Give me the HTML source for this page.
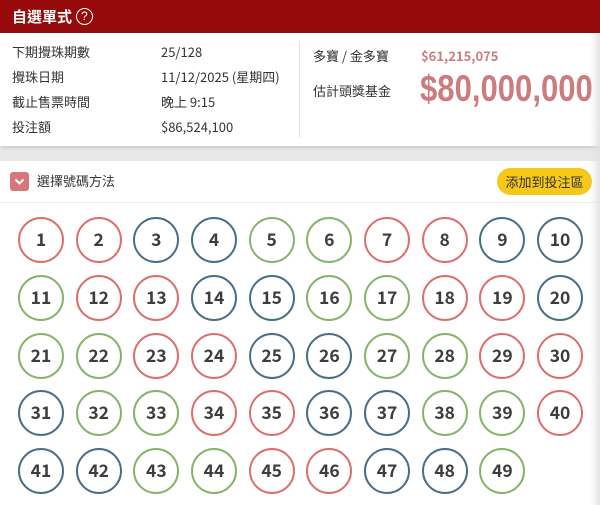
<!DOCTYPE html>
<html><head><meta charset="utf-8"><style>
*{margin:0;padding:0;box-sizing:border-box}
body{width:600px;height:505px;overflow:hidden;background:#e8e8e8;font-family:"Noto Sans CJK TC","Liberation Sans",sans-serif;color:#333;position:relative}
.hdr{position:absolute;left:0;top:0;width:600px;height:33px;background:#960a0b;color:#fff;font-size:15px;font-weight:bold;padding:0 0 0 12px;line-height:33px}
.q{position:absolute;left:76px;top:8px;width:17px;height:17px;border:1.5px solid #fff;border-radius:50%;font-size:12px;text-align:center;line-height:14px;font-weight:normal;font-family:"Liberation Sans",sans-serif}
.p1{position:absolute;left:0;top:33px;width:600px;height:113px;background:#fff;box-shadow:0 2px 3px rgba(0,0,0,.12)}
.t{position:absolute;font-size:13px;line-height:18px;color:#333;white-space:nowrap}
.vd{position:absolute;left:299px;top:41px;width:1px;height:97px;background:#e4e4e4}
.p2{position:absolute;left:0;top:161px;width:600px;height:344px;background:#fff}
.chev{position:absolute;left:10px;top:172px;width:19px;height:19px;background:#d8777a;border-radius:3px}
.btn{position:absolute;left:497px;top:168px;width:95px;height:27px;background:#f5c81a;border-radius:14px;font-size:13px;text-align:center;line-height:27px;color:#333}
.sep{position:absolute;left:0;top:202px;width:600px;height:1px;background:#ececec}
.b{position:absolute;width:46px;height:46px;border-radius:50%;border:2px solid;text-align:center;line-height:42px;font-size:17.5px;font-weight:bold;color:#3d3d3d;background:#fff}
.r{border-color:#dc6e6e}.u{border-color:#4a6e85}.g{border-color:#86b46a}
.fade{position:absolute;right:0;top:33px;width:10px;height:472px;background:linear-gradient(to right,rgba(230,230,230,0),rgba(225,225,225,.9))}
.big{position:absolute;left:420px;top:66px;font-family:"Liberation Sans",sans-serif;font-weight:bold;font-size:37px;line-height:46px;color:#cd7b7e;transform:scaleX(0.84);transform-origin:left top;white-space:nowrap}
</style></head><body>
<div class="hdr">自選單式<div class="q">?</div></div>
<div class="p1"></div>
<div class="t" style="left:12px;top:43px">下期攪珠期數</div><div class="t" style="left:161px;top:43px">25/128</div>
<div class="t" style="left:12px;top:68px">攪珠日期</div><div class="t" style="left:161px;top:68px">11/12/2025 (星期四)</div>
<div class="t" style="left:12px;top:93px">截止售票時間</div><div class="t" style="left:161px;top:93px">晚上 9:15</div>
<div class="t" style="left:12px;top:118px">投注額</div><div class="t" style="left:161px;top:118px">$86,524,100</div>
<div class="vd"></div>
<div class="t" style="left:313px;top:47px">多寶 / 金多寶</div>
<div class="t" style="left:421px;top:47px;color:#cd7b7e;font-weight:bold">$61,215,075</div>
<div class="t" style="left:313px;top:82px">估計頭獎基金</div>
<div class="big">$80,000,000</div>
<div class="p2"></div>
<div class="chev"><svg width="19" height="19"><path d="M5.5 7.5L9.5 11.5L13.5 7.5" stroke="#fff" stroke-width="2" fill="none"/></svg></div>
<div class="t" style="left:37px;top:172px">選擇號碼方法</div>
<div class="btn">添加到投注區</div>
<div class="sep"></div>
<div id="balls"></div>
<div class="fade"></div>
<script>
var c={};"1 2 7 8 12 13 18 19 23 24 29 30 34 35 40 45 46".split(" ").forEach(n=>c[n]="r");
"3 4 9 10 14 15 20 25 26 31 36 37 41 42 47 48".split(" ").forEach(n=>c[n]="u");
var h="";for(var i=1;i<=49;i++){var col=(i-1)%10,row=Math.floor((i-1)/10);
var x=41+col*57.67-23,y=240+row*57.8-23;
h+='<div class="b '+(c[i]||"g")+'" style="left:'+x+'px;top:'+y+'px">'+i+'</div>';}
document.getElementById("balls").innerHTML=h;
</script>
</body></html>
